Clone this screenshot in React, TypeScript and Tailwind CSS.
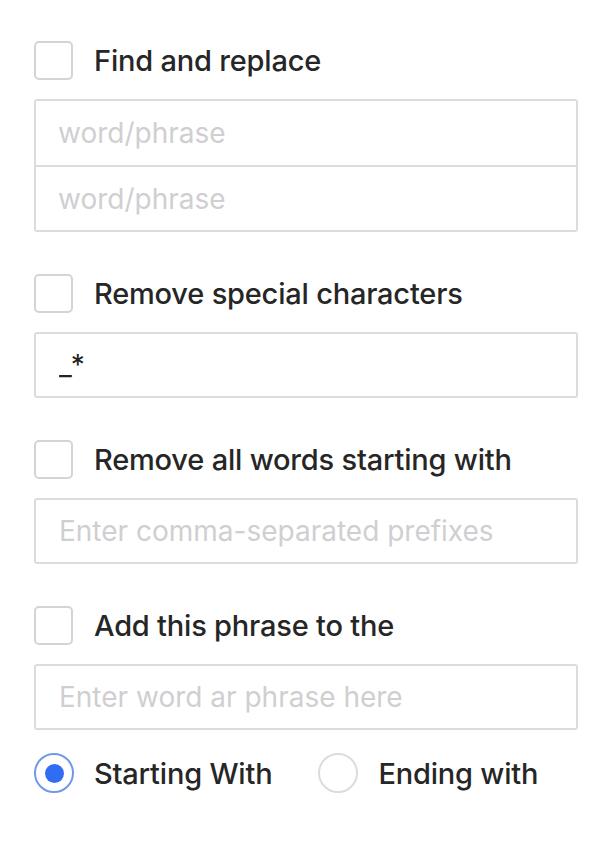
import { useState } from 'react'

const font = { fontFamily: 'Inter, "Noto Sans", sans-serif' }

function Box({ label }: { label: string }) {
  return (
    <label className="flex items-center gap-[21px] cursor-pointer">
      <span className="w-[39px] h-[39px] rounded-[5px] border-2 border-[#d4d4d8] bg-white shrink-0" />
      <span className="text-[29px] leading-none font-medium text-[#262626] tracking-[-0.2px]">{label}</span>
    </label>
  )
}

function Field({ placeholder, value }: { placeholder?: string; value?: string }) {
  return (
    <input
      defaultValue={value}
      placeholder={placeholder}
      className="w-full h-[66px] px-[23px] text-[28px] text-[#222] tracking-[1px] placeholder:tracking-normal placeholder:text-[#cfcfd2] border-2 border-[#dcdce0] rounded-[3px] outline-none bg-white"
      style={font}
    />
  )
}

function Radio({ label, on, onClick }: { label: string; on: boolean; onClick: () => void }) {
  return (
    <button className="flex items-center gap-[20px]" onClick={onClick}>
      <span
        className={
          on
            ? 'w-[40px] h-[40px] rounded-full border-2 border-[#7199ea] flex items-center justify-center'
            : 'w-[40px] h-[40px] rounded-full border-2 border-[#dcdce0] flex items-center justify-center'
        }
      >
        {on && <span className="w-[19px] h-[19px] rounded-full bg-[#2f6ef2]" />}
      </span>
      <span className="text-[29px] leading-none font-medium text-[#262626] tracking-[-0.2px]">{label}</span>
    </button>
  )
}

export default function App() {
  const [pos, setPos] = useState<'start' | 'end'>('start')

  return (
    <div className="min-h-screen bg-white pl-[34px] pr-[36px] pt-[41px]" style={font}>
      <Box label="Find and replace" />
      <div className="mt-[19px] border-2 border-[#dcdce0] rounded-[3px] flex flex-col">
        <input
          placeholder="word/phrase"
          className="h-[66px] px-[22px] text-[28px] placeholder:text-[#cfcfd2] outline-none border-b-2 border-[#dcdce0] bg-white"
          style={font}
        />
        <input
          placeholder="word/phrase"
          className="h-[63px] px-[22px] text-[28px] placeholder:text-[#cfcfd2] outline-none bg-white"
          style={font}
        />
      </div>

      <div className="mt-[42px]">
        <Box label="Remove special characters" />
      </div>
      <div className="mt-[19px]">
        <Field value="_*" />
      </div>

      <div className="mt-[42px]">
        <Box label="Remove all words starting with" />
      </div>
      <div className="mt-[19px]">
        <Field placeholder="Enter comma-separated prefixes" />
      </div>

      <div className="mt-[42px]">
        <Box label="Add this phrase to the" />
      </div>
      <div className="mt-[19px]">
        <Field placeholder="Enter word ar phrase here" />
      </div>

      <div className="mt-[23px] flex items-center gap-[46px]">
        <Radio label="Starting With" on={pos === 'start'} onClick={() => setPos('start')} />
        <Radio label="Ending with" on={pos === 'end'} onClick={() => setPos('end')} />
      </div>
    </div>
  )
}
